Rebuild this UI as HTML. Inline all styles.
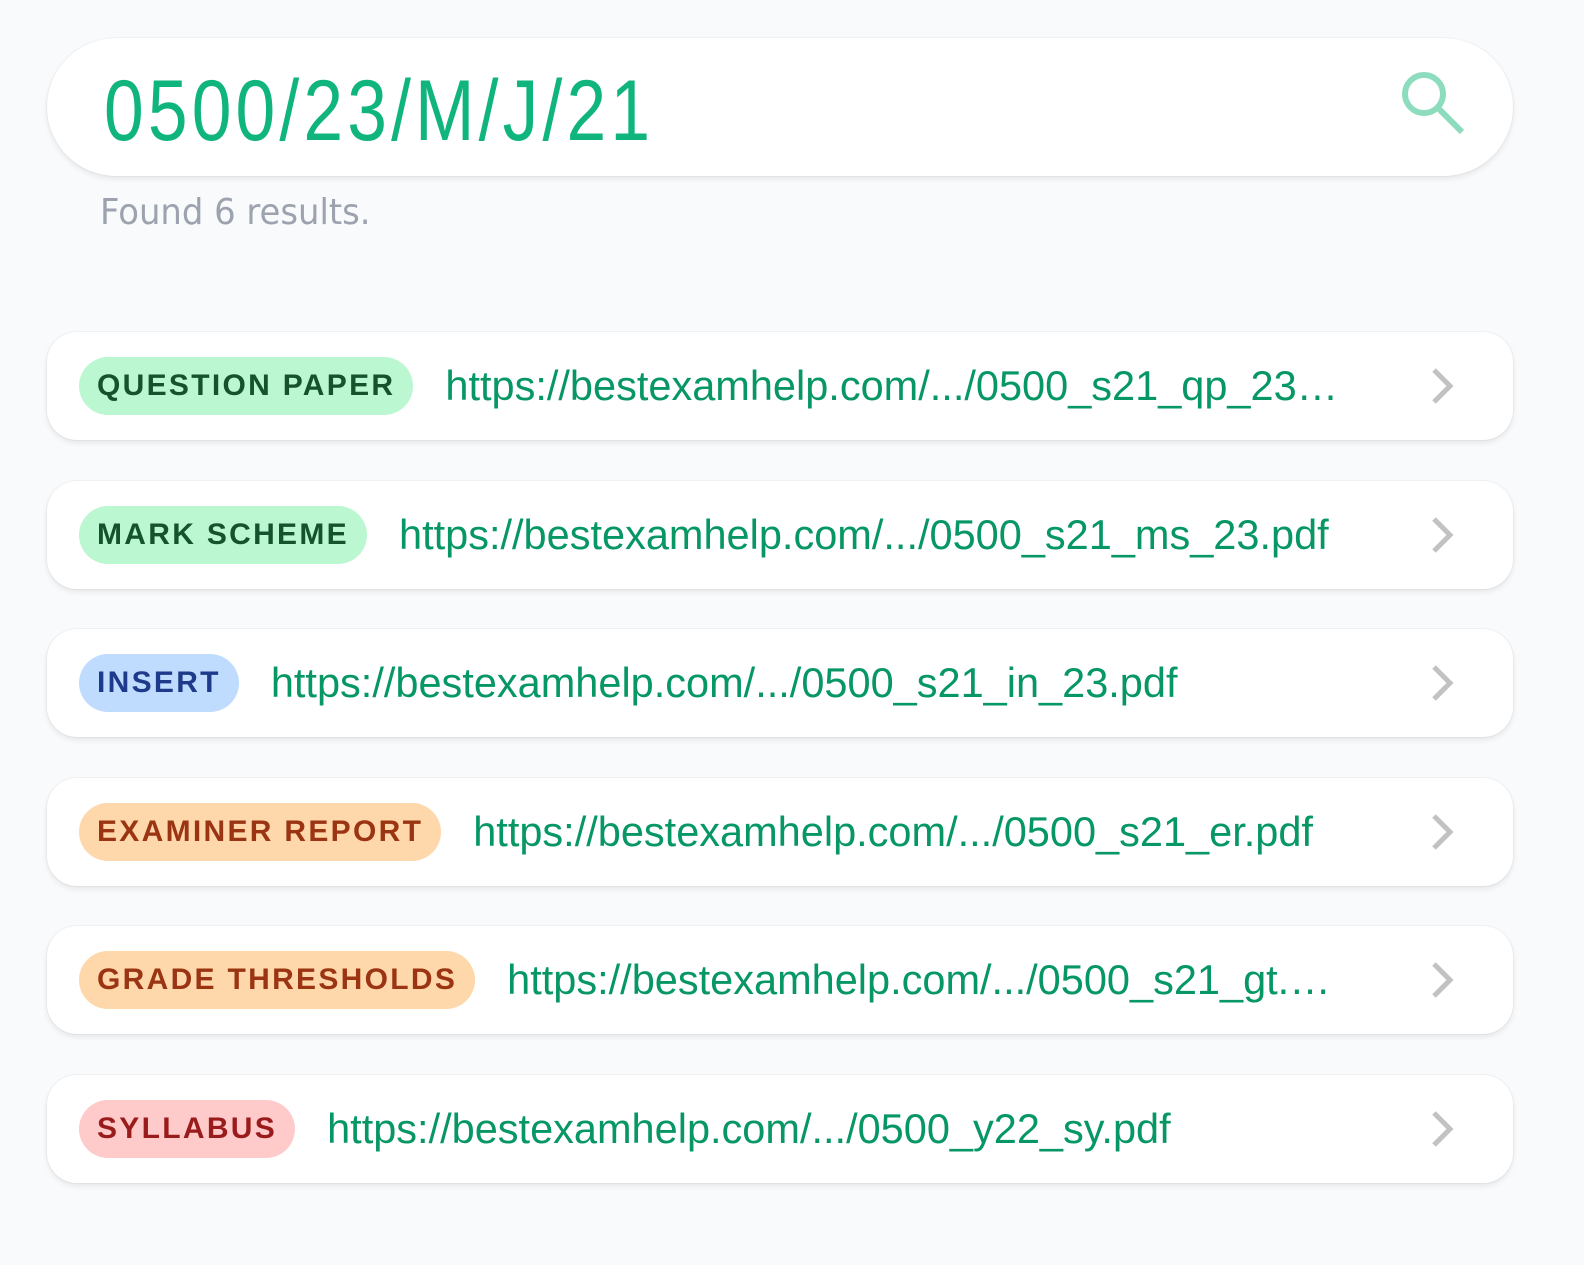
<!DOCTYPE html>
<html><head><meta charset="utf-8"><style>
*{box-sizing:border-box;margin:0;padding:0}
html,body{width:1584px;height:1265px;background:#f8fafc;overflow:hidden;font-family:"Liberation Sans",sans-serif}
.search{position:absolute;left:47px;top:38px;width:1466px;height:138px;background:#fff;border-radius:69px;box-shadow:0 3px 6px rgba(0,0,0,.08),0 0 0 1px rgba(0,0,0,.03)}
.q{position:absolute;left:104px;top:64px;font-family:"Liberation Sans",sans-serif;font-size:86px;line-height:94px;letter-spacing:5px;color:#10b47d;transform:scaleX(0.83);transform-origin:left top;white-space:nowrap}
.icon{position:absolute;left:1400px;top:70px}
.found{position:absolute;left:100px;top:192px;font-size:36px;color:#9ca3af;font-family:"DejaVu Sans","Liberation Sans",sans-serif;transform:scaleX(.94);transform-origin:left}
.card{position:absolute;left:47px;width:1466px;height:108px;background:#fff;border-radius:30px;box-shadow:0 3px 6px rgba(0,0,0,.08),0 0 0 1px rgba(0,0,0,.035);display:flex;align-items:center;padding-left:32px}
.b{height:58px;border-radius:29px;padding:0 18px;display:flex;align-items:center;font-weight:bold;font-size:30px;letter-spacing:2.3px;white-space:nowrap}
.u{margin-left:32px;font-size:41.5px;color:#079764;white-space:nowrap}
.chev{position:absolute;left:1382px;top:35px}
.g{background:#bbf7d0;color:#14532d}.bl{background:#bfdbfe;color:#1e3a8a}.o{background:#fed7aa;color:#9a3412}.r{background:#fecaca;color:#991b1b}
</style></head><body>
<div class="search"></div>
<div class="q">0500/23/M/J/21</div>
<svg class="icon" width="70" height="70" viewBox="0 0 70 70"><circle cx="24" cy="24" r="19" fill="none" stroke="#8ddcbd" stroke-width="6"/><line x1="38" y1="38" x2="62" y2="62" stroke="#8ddcbd" stroke-width="6"/></svg>
<div class="found">Found 6 results.</div>

<div class="card" style="top:332px"><span class="b g">QUESTION PAPER</span><span class="u">https://bestexamhelp.com/.../0500_s21_qp_23…</span><svg class="chev" width="28" height="38" viewBox="0 0 28 38"><polyline points="5,3 21,19 5,35" fill="none" stroke="#c2c2c2" stroke-width="5"/></svg></div>
<div class="card" style="top:481px"><span class="b g">MARK SCHEME</span><span class="u">https://bestexamhelp.com/.../0500_s21_ms_23.pdf</span><svg class="chev" width="28" height="38" viewBox="0 0 28 38"><polyline points="5,3 21,19 5,35" fill="none" stroke="#c2c2c2" stroke-width="5"/></svg></div>
<div class="card" style="top:629px"><span class="b bl">INSERT</span><span class="u">https://bestexamhelp.com/.../0500_s21_in_23.pdf</span><svg class="chev" width="28" height="38" viewBox="0 0 28 38"><polyline points="5,3 21,19 5,35" fill="none" stroke="#c2c2c2" stroke-width="5"/></svg></div>
<div class="card" style="top:778px"><span class="b o">EXAMINER REPORT</span><span class="u">https://bestexamhelp.com/.../0500_s21_er.pdf</span><svg class="chev" width="28" height="38" viewBox="0 0 28 38"><polyline points="5,3 21,19 5,35" fill="none" stroke="#c2c2c2" stroke-width="5"/></svg></div>
<div class="card" style="top:926px"><span class="b o">GRADE THRESHOLDS</span><span class="u">https://bestexamhelp.com/.../0500_s21_gt.…</span><svg class="chev" width="28" height="38" viewBox="0 0 28 38"><polyline points="5,3 21,19 5,35" fill="none" stroke="#c2c2c2" stroke-width="5"/></svg></div>
<div class="card" style="top:1075px"><span class="b r">SYLLABUS</span><span class="u">https://bestexamhelp.com/.../0500_y22_sy.pdf</span><svg class="chev" width="28" height="38" viewBox="0 0 28 38"><polyline points="5,3 21,19 5,35" fill="none" stroke="#c2c2c2" stroke-width="5"/></svg></div>
</body></html>
